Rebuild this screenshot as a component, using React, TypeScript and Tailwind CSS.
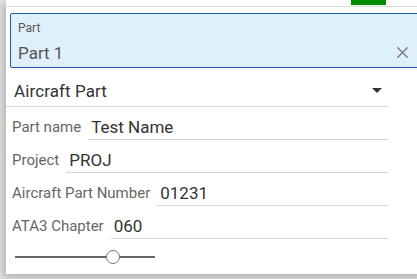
import { X } from "lucide-react";

export default function App() {
  const fields = [
    { label: "Part name", value: "Test Name" },
    { label: "Project", value: "PROJ" },
    { label: "Aircraft Part Number", value: "01231" },
    { label: "ATA3 Chapter", value: "060" },
  ];

  return (
    <div className="w-[417px] h-[279px] overflow-hidden bg-[#e4e4e4] font-['Roboto',sans-serif]">
      <div className="ml-[6px] w-[420px] bg-white shadow-[-3px_4px_8px_rgba(0,0,0,0.22)]">
        {/* top strip */}
        <div className="h-[7px] border-b border-[#dcdcdc] flex">
          <div className="ml-[345px] w-[35px] h-[5px] bg-[#008a00]" />
        </div>

        <div className="pt-[6px] pb-[10px]">
          {/* selected part */}
          <div className="ml-[4px] mr-[4px] h-[55px] rounded-[2px] border border-[#1f5bb5] bg-[#dff0fa] px-[7px] pt-[7px] relative">
            <div className="text-[12px] leading-[14px] text-[#555]">Part</div>
            <div className="mt-[8px] text-[17px] leading-[21px] text-[#555]">Part 1</div>
            <X className="absolute right-[9px] top-[29px] w-[19px] h-[19px] text-[#707070]" strokeWidth={1.5} />
          </div>

          {/* dropdown */}
          <div className="mt-[10px] w-[383px] h-[29px] border-b border-[#d6d6d6] flex items-center justify-between pl-[8px] pr-[7px]">
            <span className="text-[17px] tracking-[0.1px] text-[#333]">Aircraft Part</span>
            <svg width="10" height="6" viewBox="0 0 10 6" className="mb-[2px]">
              <path d="M0 0h10L5 5z" fill="#333" />
            </svg>
          </div>

          <div className="mt-[8px] flex flex-col gap-[8px]">
            {fields.map((f) => (
              <div key={f.label} className="flex items-end pl-[6px] w-[383px]">
                <span className="text-[15px] leading-[25px] text-[#666] mr-[7px] whitespace-nowrap">{f.label}</span>
                <span className="flex-1 border-b border-[#d6d6d6] pl-[3px] text-[17px] leading-[24px] text-[#333]">
                  {f.value}
                </span>
              </div>
            ))}
          </div>

          {/* slider */}
          <div className="mt-[11px] ml-[9px] w-[140px] h-[14px] relative flex items-center">
            <div className="w-full h-[2px] bg-[#666]" />
            <div className="absolute left-[91px] top-[0px] w-[14px] h-[14px] rounded-full bg-white border border-[#777]" />
          </div>
        </div>
      </div>
    </div>
  );
}
